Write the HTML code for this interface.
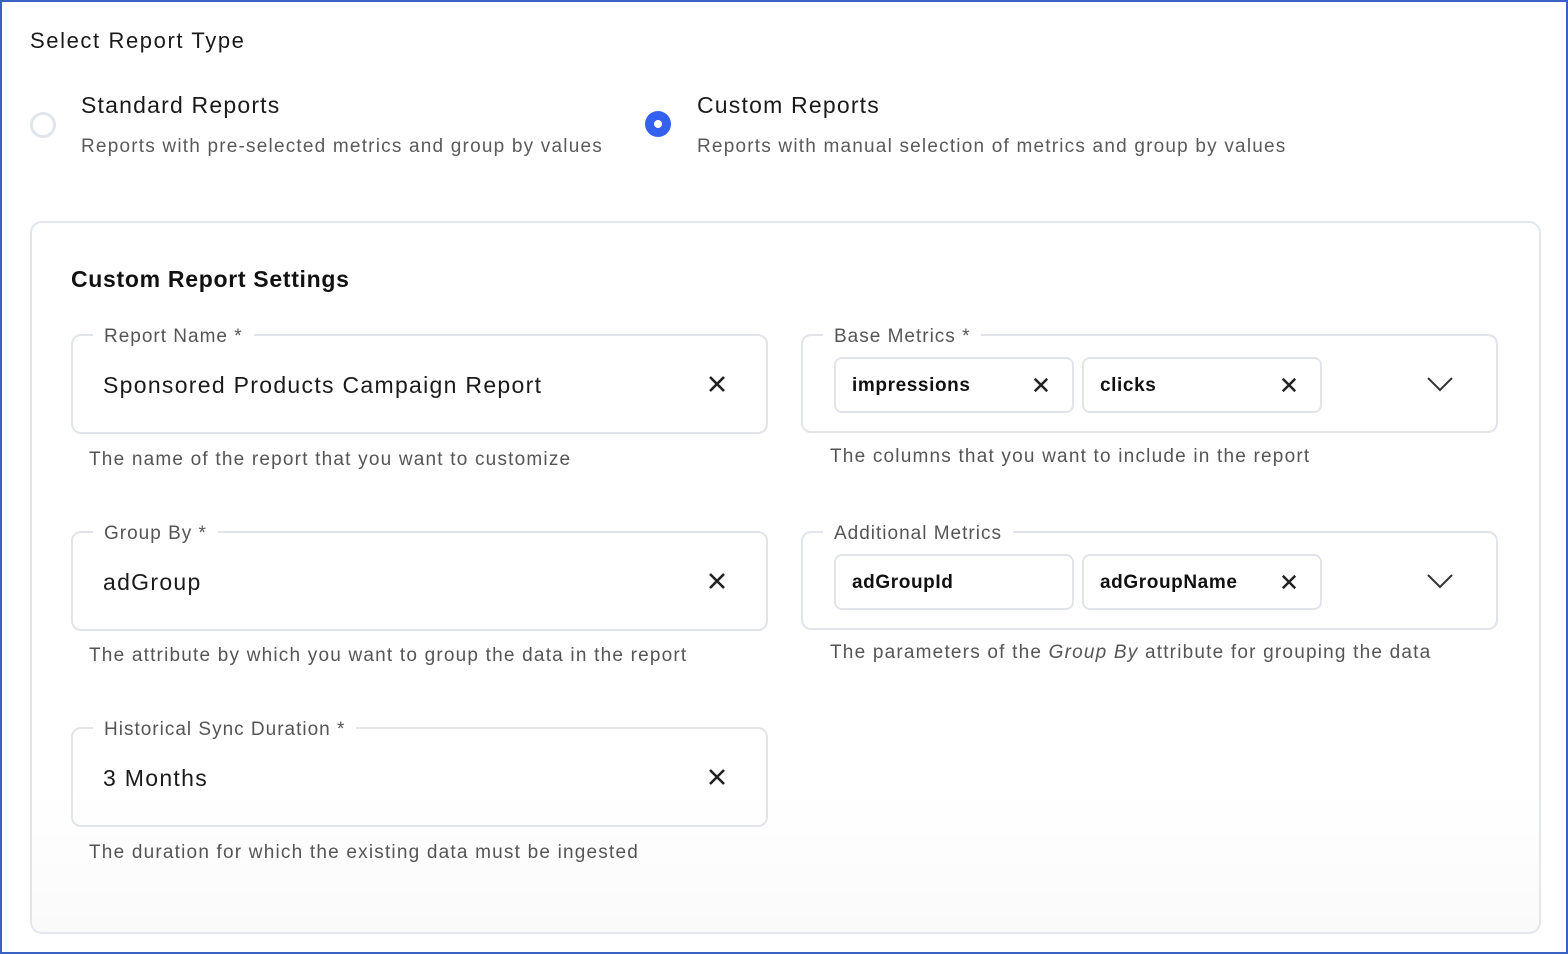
<!DOCTYPE html>
<html><head><style>
*{box-sizing:border-box;margin:0;padding:0}
body{width:1568px;height:954px;background:#fff;font-family:"Liberation Sans",Arial,sans-serif;position:relative;overflow:hidden}
.frame{position:absolute;left:0;top:0;width:1568px;height:954px;border:2px solid #3a62c4}
.abs{position:absolute;white-space:nowrap}
.radio{position:absolute;width:26px;height:26px;border-radius:50%}
.card{position:absolute;left:30px;top:221px;width:1511px;height:713px;border:2px solid #e3e6eb;border-radius:12px;background:linear-gradient(#fff 80%,#fafafa)}
.box{position:absolute;border:2px solid #e1e4e9;border-radius:10px;width:697px;height:100px}
.lbl{position:absolute;top:-10px;left:20px;background:#fff;padding:0 11px;font-size:19px;color:#555;letter-spacing:1px;white-space:nowrap}
.val{position:absolute;left:30px;top:36px;font-size:23px;color:#1a1a1a;letter-spacing:1.3px;white-space:nowrap}
.x{position:absolute;width:18px;height:18px}
.chip{position:absolute;top:21px;width:240px;height:56px;border:2px solid #e1e4e9;border-radius:8px}
.chip span{position:absolute;left:16px;top:16px;font-size:19px;font-weight:bold;color:#111;letter-spacing:0.6px}
.help{position:absolute;font-size:19px;color:#555;white-space:nowrap;letter-spacing:1.2px}
</style></head><body>
<div class="frame"></div>
<div class="abs" style="left:30px;top:28px;font-size:22px;color:#1a1a1a;letter-spacing:1.6px">Select Report Type</div>
<div class="radio" style="left:30px;top:112px;border:3px solid #e1e5ec"></div>
<div class="abs" style="left:81px;top:92px;font-size:23px;color:#1a1a1a;letter-spacing:1.2px">Standard Reports</div>
<div class="abs" style="left:81px;top:136px;font-size:19px;color:#5a5a5a;letter-spacing:1.2px">Reports with pre-selected metrics and group by values</div>
<div class="radio" style="left:645px;top:111px;background:#3461f0"><div style="position:absolute;left:9px;top:9px;width:8px;height:8px;border-radius:50%;background:#fff"></div></div>
<div class="abs" style="left:697px;top:92px;font-size:23px;color:#1a1a1a;letter-spacing:1.2px">Custom Reports</div>
<div class="abs" style="left:697px;top:136px;font-size:19px;color:#5a5a5a;letter-spacing:1.2px">Reports with manual selection of metrics and group by values</div>
<div class="card"></div>
<div class="abs" style="left:71px;top:266px;font-size:23px;font-weight:bold;color:#111;letter-spacing:0.7px">Custom Report Settings</div>

<div class="box" style="left:71px;top:334px"><div class="lbl">Report Name *</div><div class="val">Sponsored Products Campaign Report</div>
<svg class="x" style="left:635px;top:39px" viewBox="0 0 18 18"><path d="M2 2L16 16M16 2L2 16" stroke="#222" stroke-width="2.6"/></svg></div>
<div class="help" style="left:89px;top:449px">The name of the report that you want to customize</div>

<div class="box" style="left:71px;top:531px"><div class="lbl">Group By *</div><div class="val">adGroup</div>
<svg class="x" style="left:635px;top:39px" viewBox="0 0 18 18"><path d="M2 2L16 16M16 2L2 16" stroke="#222" stroke-width="2.6"/></svg></div>
<div class="help" style="left:89px;top:645px">The attribute by which you want to group the data in the report</div>

<div class="box" style="left:71px;top:727px"><div class="lbl">Historical Sync Duration *</div><div class="val">3 Months</div>
<svg class="x" style="left:635px;top:39px" viewBox="0 0 18 18"><path d="M2 2L16 16M16 2L2 16" stroke="#222" stroke-width="2.6"/></svg></div>
<div class="help" style="left:89px;top:842px">The duration for which the existing data must be ingested</div>

<div class="box" style="left:801px;top:334px;height:99px"><div class="lbl">Base Metrics *</div>
<div class="chip" style="left:31px"><span>impressions</span><svg class="x" style="left:197px;top:18px;width:16px;height:16px" viewBox="0 0 18 18"><path d="M2 2L16 16M16 2L2 16" stroke="#222" stroke-width="2.8"/></svg></div>
<div class="chip" style="left:279px"><span>clicks</span><svg class="x" style="left:197px;top:18px;width:16px;height:16px" viewBox="0 0 18 18"><path d="M2 2L16 16M16 2L2 16" stroke="#222" stroke-width="2.8"/></svg></div>
<svg style="position:absolute;left:624px;top:40px" width="26" height="16" viewBox="0 0 26 16"><path d="M1 2L13 14L25 2" fill="none" stroke="#333" stroke-width="2"/></svg></div>
<div class="help" style="left:830px;top:446px">The columns that you want to include in the report</div>

<div class="box" style="left:801px;top:531px;height:99px"><div class="lbl">Additional Metrics</div>
<div class="chip" style="left:31px"><span>adGroupId</span></div>
<div class="chip" style="left:279px"><span>adGroupName</span><svg class="x" style="left:197px;top:18px;width:16px;height:16px" viewBox="0 0 18 18"><path d="M2 2L16 16M16 2L2 16" stroke="#222" stroke-width="2.8"/></svg></div>
<svg style="position:absolute;left:624px;top:40px" width="26" height="16" viewBox="0 0 26 16"><path d="M1 2L13 14L25 2" fill="none" stroke="#333" stroke-width="2"/></svg></div>
<div class="help" style="left:830px;top:642px">The parameters of the <i>Group By</i> attribute for grouping the data</div>
</body></html>
